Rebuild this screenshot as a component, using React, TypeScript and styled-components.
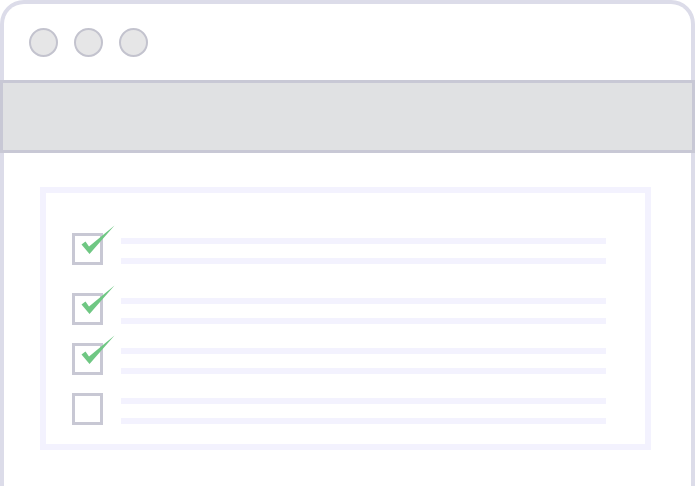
import React from "react";
import styled, { createGlobalStyle } from "styled-components";

const Global = createGlobalStyle`
  html, body { margin: 0; padding: 0; background: #ffffff; }
  body { font-family: "Liberation Sans", Arial, sans-serif; overflow: hidden; }
  * { box-sizing: border-box; }
`;

const Frame = styled.div`
  width: 695px;
  height: 100vh;
  border: 4px solid #dcdce9;
  border-bottom: none;
  border-radius: 24px 24px 0 0;
  background: #ffffff;
  display: flex;
  flex-direction: column;
`;

const TitleBar = styled.div`
  height: 76px;
  display: flex;
  align-items: center;
  gap: 16px;
  padding-left: 25px;
`;

const Dot = styled.span`
  width: 29px;
  height: 29px;
  border-radius: 50%;
  background: #e6e6e7;
  border: 2.5px solid #c3c3ce;
`;

const AddressBar = styled.div`
  height: 73px;
  margin: 0 -4px 0 -4px;
  background: #e0e1e3;
  border: 3px solid #c8c8d5;
`;

const Card = styled.div`
  margin: 34px 40px 0 36px;
  border: 6px solid #f3f2fe;
  padding: 40px 39px 19px 26px;
  display: flex;
  flex-direction: column;
`;

const Row = styled.div<{ $gap: number }>`
  display: flex;
  align-items: flex-start;
  gap: 18px;
  margin-top: ${(p) => p.$gap}px;
`;

const Box = styled.div`
  position: relative;
  width: 31px;
  height: 32px;
  flex: none;
  border: 3px solid #c8c8d4;
  background: #ffffff;
`;

const Check = styled.svg`
  position: absolute;
  left: -3px;
  top: -9px;
  width: 48px;
  height: 36px;
  overflow: visible;
`;

const Lines = styled.div`
  flex: 1;
  display: flex;
  flex-direction: column;
  gap: 14px;
  padding-top: 5px;
`;

const Line = styled.div`
  height: 6px;
  background: #f3f2fe;
`;

const CheckMark = () => (
  <Check viewBox="0 0 48 36">
    <path d="M9.5 17.5 L13.5 14.5 L17 19.5 L42.5 -1.5 L17.5 27 Z" fill="#6fc783" />
  </Check>
);

const items = [
  { checked: true, gap: 0 },
  { checked: true, gap: 28 },
  { checked: true, gap: 18 },
  { checked: false, gap: 18 },
];

export default function App() {
  return (
    <>
      <Global />
      <Frame>
        <TitleBar>
          <Dot />
          <Dot />
          <Dot />
        </TitleBar>
        <AddressBar />
        <Card>
          {items.map((it, i) => (
            <Row key={i} $gap={it.gap}>
              <Box>{it.checked && <CheckMark />}</Box>
              <Lines>
                <Line />
                <Line />
              </Lines>
            </Row>
          ))}
        </Card>
      </Frame>
    </>
  );
}
